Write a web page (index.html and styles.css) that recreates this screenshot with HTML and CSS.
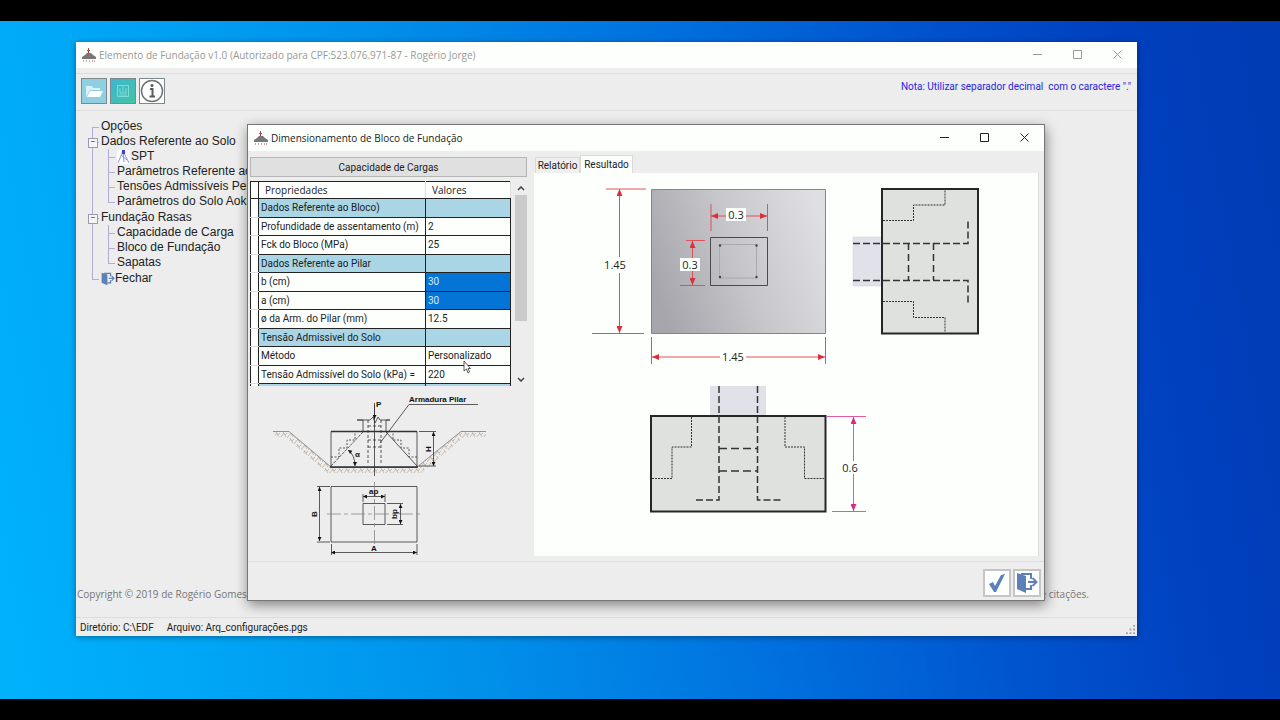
FILE: index.html
```html
<!DOCTYPE html>
<html lang="pt-BR">
<head>
    <meta charset="UTF-8">
    <meta name="viewport" content="width=device-width, initial-scale=1.0">
    <title>Elemento de Fundação</title>
    <link rel="stylesheet" href="styles.css">
</head>
<body>
    <svg width="0" height="0" class="defs" aria-hidden="true">
        <symbol id="logo" viewBox="0 0 14 14">
            <path d="M0 11V9L3 7 5 5H9L11 7 14 9V11Z" fill="#777"/>
            <path d="M6 2H7V5H6Z" fill="#a33"/>
            <path d="M5 2.500H8M1 13h1M4 13h1M7 13h1M10 13h1M12 13h1M6.500 0V3" stroke="#b44b4b"/>
        </symbol>
        <symbol id="door" viewBox="0 0 22 22">
            <path d="M5 2H15V7M15 13V17H10" fill="none" stroke="#5f7fb8" stroke-width="2"/>
            <path d="M1 1 10 4V21L1 17Z" fill="#5f7fb8"/>
            <path d="M12 10H20M16.500 6 20.500 10 16.500 14" fill="none" stroke="#fff" stroke-width="5"/>
            <path d="M12 10H20M16.500 6 20.500 10 16.500 14" fill="none" stroke="#5f7fb8" stroke-width="2"/>
        </symbol>
    </svg>

    <main class="desktop">
        <section class="window main-window">
            <header class="title-bar inactive">
                <svg class="logo"><use href="#logo"/></svg>
                <h1>Elemento de Fundação v1.0 (Autorizado para CPF:523.076.971-87 - Rogério Jorge)</h1>
                <div class="window-buttons">
                    <button aria-label="Minimizar"><svg viewBox="0 0 9 9"><path d="M0 4.500H9"/></svg></button>
                    <button aria-label="Maximizar"><svg viewBox="0 0 9 9"><path d="M.5.500H8.500V8.500H.500Z"/></svg></button>
                    <button aria-label="Fechar janela"><svg viewBox="0 0 9 9"><path d="M.5.500 8.500 8.500M8.500.500.500 8.500"/></svg></button>
                </div>
            </header>
            <div class="menu-strip"></div>
            <div class="toolbar">
                <button class="tool open" aria-label="Abrir">
                    <svg viewBox="0 0 24 24"><path d="M4 18V7H10L11 9H18V11H8Z" fill="#d9f1f8"/><path d="M8 12H21L18 18H5Z" fill="#fff"/></svg>
                </button>
                <button class="tool calc" aria-label="Calcular">
                    <svg viewBox="0 0 24 24"><path d="M6.500 6.500H17.500V17.500H6.500ZM12 7V13M9 9V14H15V9M8 16H16" fill="none" stroke="#8fe3df" stroke-width=".8"/></svg>
                </button>
                <button class="tool info" aria-label="Sobre">
                    <svg viewBox="0 0 24 24"><circle cx="12" cy="12" r="10.500" fill="none" stroke="#6f7476" stroke-width="1.500"/><path d="M10 10H12.500V17M9.500 17.500H15" fill="none" stroke="#555a5c" stroke-width="2"/><circle cx="12" cy="6.500" r="1.500" fill="#555a5c"/></svg>
                </button>
                <p class="note">Nota: Utilizar separador decimal&nbsp; com o caractere "."</p>
            </div>

            <nav class="tree">
                <ul>
                    <li><a href="#">Opções</a></li>
                    <li class="parent"><a href="#">Dados Referente ao Solo</a>
                        <ul>
                            <li><a href="#"><svg class="spt-icon" viewBox="0 0 14 14"><path d="M0 0H13V14H0Z" fill="#fff"/><path d="M6 1 1 13M6 1 7 12M6 1 12 13M4 5 10 10" fill="none" stroke="#8d8fe0"/><path d="M5 0H8V4H5Z" fill="#3a3fd0"/></svg>SPT</a></li>
                            <li><a href="#">Parâmetros Referente ao</a></li>
                            <li><a href="#">Tensões Admissíveis Per</a></li>
                            <li><a href="#">Parâmetros do Solo Aoki</a></li>
                        </ul>
                    </li>
                    <li class="parent"><a href="#">Fundação Rasas</a>
                        <ul>
                            <li><a href="#">Capacidade de Carga</a></li>
                            <li><a href="#">Bloco de Fundação</a></li>
                            <li><a href="#">Sapatas</a></li>
                        </ul>
                    </li>
                    <li><a href="#"><svg class="door-icon"><use href="#door"/></svg>Fechar</a></li>
                </ul>
            </nav>

            <div class="copyright">
                <span>Copyright © 2019 de Rogério Gomes J</span>
                <span>de citações.</span>
            </div>
            <footer class="status-bar">
                <span>Diretório: C:\EDF</span>
                <span>Arquivo: Arq_configurações.pgs</span>
                <svg class="grip" viewBox="0 0 10 10"><path d="M8 1h2M8 5h2M4 5h2M0 9h2M4 9h2M8 9h2" stroke="#a0a0a0" stroke-width="2"/></svg>
            </footer>
        </section>

        <section class="window dialog">
            <header class="title-bar">
                <svg class="logo"><use href="#logo"/></svg>
                <h2>Dimensionamento de Bloco de Fundação</h2>
                <div class="window-buttons">
                    <button aria-label="Minimizar"><svg viewBox="0 0 9 9"><path d="M0 4.500H9"/></svg></button>
                    <button aria-label="Maximizar"><svg viewBox="0 0 9 9"><path d="M.5.500H8.500V8.500H.500Z"/></svg></button>
                    <button aria-label="Fechar janela"><svg viewBox="0 0 9 9"><path d="M.5.500 8.500 8.500M8.500.500.500 8.500"/></svg></button>
                </div>
            </header>

            <div class="dialog-body">
                <div class="left-panel">
                    <button class="load-button">Capacidade de Cargas</button>
                    <div class="grid-view">
                        <table>
                            <thead>
                                <tr><th class="row-head"></th><th>Propriedades</th><th>Valores</th></tr>
                            </thead>
                            <tbody>
                                <tr class="group"><td class="row-head"></td><td>Dados Referente ao Bloco)</td><td></td></tr>
                                <tr><td class="row-head"></td><td>Profundidade de assentamento (m)</td><td>2</td></tr>
                                <tr><td class="row-head"></td><td>Fck do Bloco (MPa)</td><td>25</td></tr>
                                <tr class="group"><td class="row-head"></td><td>Dados Referente ao Pilar</td><td></td></tr>
                                <tr><td class="row-head"></td><td>b (cm)</td><td class="selected">30</td></tr>
                                <tr><td class="row-head"></td><td>a (cm)</td><td class="selected">30</td></tr>
                                <tr><td class="row-head"></td><td>ø da Arm. do Pilar (mm)</td><td>12.5</td></tr>
                                <tr class="group"><td class="row-head"></td><td>Tensão Admissivel do Solo</td><td></td></tr>
                                <tr><td class="row-head"></td><td>Método</td><td>Personalizado</td></tr>
                                <tr><td class="row-head"></td><td>Tensão Admissível do Solo (kPa) =</td><td>220</td></tr>
                                <tr class="group"><td class="row-head"></td><td></td><td></td></tr>
                            </tbody>
                        </table>
                        <div class="scrollbar">
                            <svg viewBox="0 0 8 5"><path d="M1 4 4 1 7 4"/></svg>
                            <div class="track"><div class="thumb"></div></div>
                            <svg viewBox="0 0 8 5"><path d="M1 1 4 4 7 1"/></svg>
                        </div>
                    </div>

                    <svg class="scheme" viewBox="250 386 277 170">
                        <defs>
                            <pattern id="soil" width="7" height="6" patternUnits="userSpaceOnUse">
                                <path d="M0 6 4 1M3 0 6 5M5 3 7 1" stroke="#b5a294" stroke-width=".7" fill="none"/>
                            </pattern>
                            <marker id="tip" viewBox="0 0 6 6" refX="6" refY="3" markerWidth="6" markerHeight="4" markerUnits="userSpaceOnUse" orient="auto-start-reverse"><path d="M0 0 6 3 0 6Z" fill="#111"/></marker>
                        </defs>
                        <path d="M273 432H289L331 467H417L461 432H486V437H464L421 473H327L285 437H275Z" fill="url(#soil)"/>
                        <g fill="none" stroke="#333" stroke-width=".8">
                            <path d="M273 431.500H289L331 467M417 467 461 431.500H486" stroke="#777"/>
                            <path d="M331 431.500H417V467.500H331Z"/>
                            <path d="M331 431.500H417M330 467H418" stroke-width="1.600"/>
                            <path d="M331 466 363 432" stroke-dasharray="3 1"/>
                            <path d="M386 432 417 466"/>
                            <path d="M331 457H339V448H347V440H355V432M417 457H409V448H401V440H393V432" stroke-dasharray="2 1.500"/>
                            <path d="M363 431V420H357M386 431V420H390M357 420H370L373 417 375 423 378 417 380 420H390"/>
                            <path d="M368 420V465M381 420V465M368 426H381M368 440H381M368 447H381" stroke-dasharray="3 2"/>
                            <path d="M374.500 403V476"/>
                            <path d="M374.500 405V419" marker-end="url(#tip)"/>
                            <path d="M380 443 409 404.500H478"/>
                            <path d="M355 466Q355 455 348 450" marker-start="url(#tip)" marker-end="url(#tip)"/>
                            <path d="M433.500 432V466" marker-start="url(#tip)" marker-end="url(#tip)"/>
                            <path d="M419 431.500H436M419 466H436"/>
                            <path d="M331 486.500H417V542H331ZM363 503.500H385V524.500H363Z"/>
                            <path d="M327 514H423M374.500 482V546" stroke="#888" stroke-dasharray="14 3 4 3"/>
                            <g marker-start="url(#tip)" marker-end="url(#tip)">
                                <path d="M363 496.500H385"/>
                                <path d="M319.500 487V541"/>
                                <path d="M331 552.500H417"/>
                                <path d="M400.500 504V524"/>
                            </g>
                            <path d="M363 494V502M385 494V502M317 486.500H330M317 542H330M331.500 544V555M417 544V555M387 503.500H403M387 524.500H403"/>
                        </g>
                        <g class="scheme-text">
                            <text x="409" y="402">Armadura Pilar</text>
                            <text x="376" y="407">P</text>
                            <text x="355" y="457">α</text>
                            <text x="369" y="494">ap</text>
                            <text x="371" y="551">A</text>
                            <text transform="translate(317 517) rotate(-90)">B</text>
                            <text transform="translate(397 519) rotate(-90)">bp</text>
                            <text transform="translate(431 452) rotate(-90)">H</text>
                        </g>
                    </svg>
                </div>

                <div class="right-panel">
                    <div class="tabs" role="tablist">
                        <button role="tab" class="tab">Relatório</button>
                        <button role="tab" class="tab active" aria-selected="true">Resultado</button>
                    </div>
                    <div class="result">
                        <svg viewBox="534 173 504 382" preserveAspectRatio="xMinYMin meet">
                            <defs>
                                <linearGradient id="plan" x1="0" y1=".6" x2="1" y2=".3">
                                    <stop offset="0" stop-color="#a6a6ac"/>
                                    <stop offset=".5" stop-color="#c6c6cb"/>
                                    <stop offset="1" stop-color="#dfdfe3"/>
                                </linearGradient>
                                <marker id="red" viewBox="0 0 7 6" refX="7" refY="3" markerWidth="7" markerHeight="6" markerUnits="userSpaceOnUse" orient="auto-start-reverse"><path d="M0 0 7 3 0 6Z" fill="#dc2f3c"/></marker>
                                <marker id="pink" viewBox="0 0 7 6" refX="7" refY="3" markerWidth="7" markerHeight="6" markerUnits="userSpaceOnUse" orient="auto-start-reverse"><path d="M0 0 7 3 0 6Z" fill="#d62c82"/></marker>
                            </defs>

                            <!-- planta -->
                            <path d="M651.500 189.500H825.500V333.500H651.500Z" fill="url(#plan)" stroke="#858585"/>
                            <path d="M710.500 237.500H767.500V285.500H710.500Z" fill="none" stroke="#4a4a4a"/>
                            <path d="M719.500 244.500H756.500V278H719.500Z" fill="none" stroke="#aaa"/>
                            <g fill="#444"><circle cx="720" cy="245.500" r="1.200"/><circle cx="756.500" cy="245.500" r="1.200"/><circle cx="720" cy="277" r="1.200"/><circle cx="756.500" cy="277" r="1.200"/></g>
                            <g fill="none" stroke="#e0505a">
                                <path d="M606 189H646M592 333.500H644M711 204V231M767.500 204V231M686 240.500H705M680 285.500H705M651.500 337V364M825.500 337V364"/>
                                <g marker-start="url(#red)" marker-end="url(#red)">
                                    <path d="M619.500 189V333"/>
                                    <path d="M711 216H767"/>
                                    <path d="M692.500 241V285"/>
                                    <path d="M652 357H825"/>
                                </g>
                            </g>
                            <g fill="#fdfffd"><path d="M604 257H631V273H604ZM726 208H746V221H726ZM680 258H700V271H680ZM720 350H746V364H720Z"/></g>

                            <!-- vista lateral -->
                            <path d="M853 237H882V286H853Z" fill="#e1e1ea" stroke="#cfcfd8" stroke-width=".5"/>
                            <path d="M882 189H978V333.500H882Z" fill="#dfe1df" stroke="#262626" stroke-width="2"/>
                            <g fill="none" stroke="#333">
                                <path d="M883 220.500H913.500V205H945V190M883 301.500H913.500V317.500H945V332" stroke-dasharray="2 1"/>
                                <path d="M853 243.500H968V219M853 280.500H968V304" stroke-width="1.500" stroke-dasharray="7 3"/>
                                <path d="M908.500 243V280M933.500 243V280" stroke-width="1.500" stroke-dasharray="7 4"/>
                            </g>

                            <!-- vista frontal -->
                            <path d="M710.500 386.500H765.500V416H710.500Z" fill="#e1e1ea" stroke="#cfcfd8" stroke-width=".5"/>
                            <path d="M651 416H825.500V511.500H651Z" fill="#dfe1df" stroke="#262626" stroke-width="2"/>
                            <g fill="none" stroke="#333">
                                <path d="M691.500 417V447H672V478.500H652M785 417V447H804.500V478.500H824" stroke-dasharray="2 1"/>
                                <path d="M719 386V500H695M757.500 386V500H782" stroke-width="1.500" stroke-dasharray="7 3"/>
                                <path d="M719 448.500H757M719 471H757" stroke-width="1.500" stroke-dasharray="8 4"/>
                            </g>
                            <g fill="none" stroke="#e05a9c">
                                <path d="M827 416.500H866M832 511.500H866"/>
                                <path d="M853.500 417V511" marker-start="url(#pink)" marker-end="url(#pink)"/>
                            </g>
                            <path d="M840 461H862V474H840Z" fill="#fdfffd"/>

                            <g class="dimension">
                                <text x="615" y="269">1.45</text>
                                <text x="736" y="219">0.3</text>
                                <text x="690" y="269">0.3</text>
                                <text x="733" y="361">1.45</text>
                                <text x="850" y="472">0.6</text>
                            </g>
                        </svg>
                    </div>
                </div>
            </div>

            <footer class="dialog-footer">
                <button aria-label="Confirmar"><svg viewBox="0 0 22 22"><path d="M3 12 7 10 9 14 15 3 19 2 10 20H8Z" fill="#5f7fb8"/></svg></button>
                <button aria-label="Sair"><svg viewBox="0 0 22 22"><use href="#door"/></svg></button>
            </footer>
            <svg class="cursor" viewBox="0 0 8 14"><path d="M1 1V11L3.500 9 5 13 6.500 12 5 8.500H7.500Z" fill="#fff" stroke="#333" stroke-width=".8"/></svg>
        </section>
    </main>
</body>
</html>
```

FILE: styles.css
```css
* {
    box-sizing: border-box;
}

body {
    margin: 0;
    padding: 21px 0;
    height: 100vh;
    background: #000;
    font-family: Roboto, Arial, sans-serif;
    font-size: 10px;
    color: #222;
}

h1, h2, p, ul {
    margin: 0;
    padding: 0;
}

button {
    font: inherit;
    color: inherit;
    padding: 0;
}

.defs {
    position: absolute;
}

.desktop {
    position: relative;
    height: 100%;
    overflow: hidden;
    background: linear-gradient(80deg, #00b2fb 0%, #00a6f6 15%, #0090ea 35%, #0070de 56%, #0050cc 76%, #0040bf 88%, #003cb2 100%);
}

/* windows */
.window {
    position: absolute;
    display: flex;
    flex-direction: column;
    background: #ecedec;
}

.main-window {
    top: 21px;
    left: 76px;
    right: 143px;
    bottom: 63px;
    box-shadow: 0 1px 6px rgba(0, 0, 0, 0.4);
}

.dialog {
    top: 103px;
    left: 247px;
    right: 235px;
    bottom: 98px;
    border: 1px solid #777;
    box-shadow: 1px 4px 12px rgba(0, 0, 0, 0.45);
}

.title-bar {
    display: flex;
    align-items: center;
    height: 26px;
    padding-left: 6px;
    background: #fdfffd;
    font-family: "Open Sans", sans-serif;
    color: #222;
}

.title-bar h1,
.title-bar h2 {
    flex: 1;
    font-size: 10px;
    font-weight: normal;
}

.title-bar.inactive {
    color: #999;
}

.logo {
    width: 14px;
    height: 14px;
    margin-right: 3px;
}

.window-buttons {
    display: flex;
}

.window-buttons button {
    width: 40px;
    height: 26px;
    border: none;
    background: none;
}

.window-buttons svg {
    width: 9px;
    height: 9px;
    fill: none;
    stroke: currentColor;
}

/* main window */
.menu-strip {
    height: 6px;
    border-bottom: 1px solid #dcdddc;
}

.toolbar {
    display: flex;
    gap: 3px;
    height: 37px;
    padding: 4px 6px 0 5px;
    border-bottom: 1px solid #dcdddc;
}

.tool {
    width: 26px;
    height: 26px;
    border: 1px solid #7c8a90;
}

.tool svg {
    display: block;
    width: 24px;
    height: 24px;
}

.open {
    background: #8fcfe2;
}

.calc {
    background: linear-gradient(135deg, #3eb6cf, #42c4a6);
}

.info {
    background: #fdfffd;
}

.note {
    margin: 3px 0 0 auto;
    color: #2a1ee0;
}

.tree {
    flex: 1;
    padding: 8px 0 0 15px;
    font-family: "Liberation Sans", Arial, sans-serif;
    font-size: 12px;
    line-height: 15px;
}

.tree ul {
    list-style: none;
}

.tree li {
    position: relative;
    padding-left: 10px;
}

.tree ul ul {
    padding: 0 0 1px 6px;
}

.tree ul ul li {
    padding-left: 10px;
}

.tree a {
    display: flex;
    align-items: center;
    height: 15px;
    color: inherit;
    text-decoration: none;
}

/* connector lines */
.tree li::before {
    content: "";
    position: absolute;
    left: 1px;
    top: 0;
    bottom: 0;
    border-left: 1px solid #b0aed6;
}

.tree li::after {
    content: "";
    position: absolute;
    left: 1px;
    top: 8px;
    width: 7px;
    border-top: 1px solid #b0aed6;
}

.tree > ul > li:first-child::before {
    top: 8px;
}

.tree li:last-child::before {
    bottom: auto;
    height: 8px;
}

.tree .parent > a::before {
    content: "−";
    position: absolute;
    z-index: 1;
    left: -3px;
    top: 4px;
    width: 8px;
    height: 8px;
    border: 1px solid #9a9ab4;
    background: #f4f4f4;
    font-size: 8px;
    line-height: 6px;
    text-align: center;
}

.spt-icon,
.door-icon {
    width: 14px;
    height: 14px;
}

.copyright {
    display: flex;
    justify-content: space-between;
    height: 30px;
    padding: 0 48px 0 1px;
    font-family: "Open Sans", sans-serif;
    color: #777;
}

.status-bar {
    display: flex;
    align-items: center;
    gap: 13px;
    height: 19px;
    padding-left: 4px;
    border-top: 1px solid #dcdddc;
}

.grip {
    width: 9px;
    height: 9px;
    margin: 5px 2px 0 auto;
}

/* dialog */
.dialog-body {
    flex: 1;
    display: flex;
    gap: 7px;
    min-height: 0;
    padding: 4px 5px 5px 2px;
}

.left-panel {
    display: flex;
    flex-direction: column;
    width: 277px;
    padding-top: 2px;
}

.load-button {
    height: 20px;
    border: 1px solid #b4b5b4;
    background: #dfe0df;
}

.grid-view {
    display: flex;
    gap: 4px;
    height: 205px;
    margin-top: 4px;
    overflow: hidden;
}

table {
    flex: 1;
    width: 100%;
    border-collapse: collapse;
    table-layout: fixed;
    background: #fdfffd;
}

th,
td {
    height: 19px;
    padding: 0 2px;
    border: 1px solid #222;
    text-align: left;
    line-height: 16px;
    white-space: nowrap;
}

th {
    height: 17px;
    padding-left: 6px;
    border-right-color: #ddd;
    font-family: "Open Sans", sans-serif;
    font-weight: normal;
    line-height: 14px;
}

th:nth-child(3),
td:nth-child(3) {
    width: 85px;
}

tbody tr:nth-child(even) td {
    height: 18px;
}

.row-head {
    width: 8px;
    padding: 0;
    border-top-color: #ddd;
    border-bottom-color: #ddd;
}

th.row-head {
    border-color: #222;
}

.group td:not(.row-head) {
    background: #a9d5e4;
}

td.selected {
    background: #0474d6;
    color: #d8ecff;
}

.scrollbar {
    display: flex;
    flex-direction: column;
    align-items: center;
    flex: none;
    width: 12px;
    padding: 5px 0 4px;
}

.scrollbar svg {
    width: 8px;
    height: 5px;
    fill: none;
    stroke: #444;
    stroke-width: 1.5;
}

.track {
    flex: 1;
    width: 100%;
    margin: 4px 0;
}

.thumb {
    height: 71%;
    background: #cacaca;
}

.scheme {
    display: block;
    flex: 1;
    min-height: 0;
    width: 100%;
}

.scheme-text {
    font: bold 8px "Liberation Sans", Arial, sans-serif;
    fill: #111;
}

.right-panel {
    flex: 1;
    display: flex;
    flex-direction: column;
    min-width: 0;
}

.tabs {
    display: flex;
    align-items: flex-end;
    height: 18px;
    padding-left: 1px;
}

.tab {
    width: 45px;
    height: 16px;
    border: 1px solid #d9dad9;
    border-bottom: none;
    background: #efefef;
}

.tab.active {
    width: 53px;
    height: 18px;
    background: #fdfffd;
}

.result {
    flex: 1;
    min-height: 0;
    background: #fdfffd;
    border-right: 1px solid #dcdddc;
}

.result svg {
    display: block;
    width: 100%;
    height: 100%;
}

.dimension {
    font: 11px "Open Sans", sans-serif;
    fill: #222;
    text-anchor: middle;
}

.dialog-footer {
    display: flex;
    justify-content: flex-end;
    gap: 2px;
    height: 39px;
    padding: 7px 3px 0;
    border-top: 1px solid #dcdddc;
}

.dialog-footer button {
    width: 28px;
    height: 28px;
    border: 2px solid #c4c5c4;
    background: #fdfffd;
}

.dialog-footer svg {
    display: block;
    width: 22px;
    height: 22px;
    margin: 0 auto;
}

.cursor {
    position: absolute;
    left: 215px;
    top: 235px;
    width: 8px;
    height: 14px;
}
```
